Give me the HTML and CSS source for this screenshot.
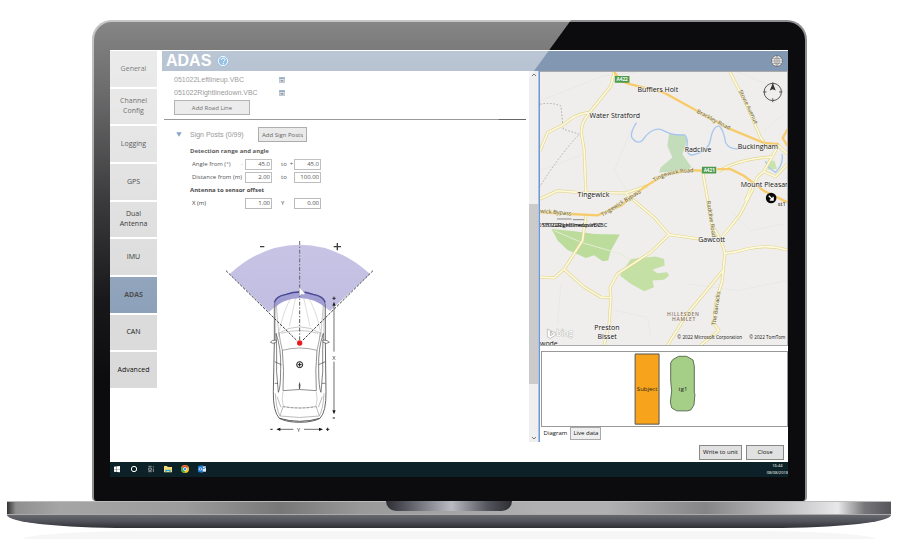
FILE: index.html
```html
<!DOCTYPE html>
<html lang="en">
<head>
<meta charset="utf-8">
<title>ADAS setup</title>
<link rel="stylesheet" href="styles.css">
</head>
<body>
<div class="laptop">
  <div class="lid">
    <div class="screen">
      <div class="app">
        <nav class="sidebar">
          <button class="tile">General</button>
          <button class="tile">Channel<br>Config</button>
          <button class="tile">Logging</button>
          <button class="tile">GPS</button>
          <button class="tile">Dual<br>Antenna</button>
          <button class="tile">IMU</button>
          <button class="tile tile-active">ADAS</button>
          <button class="tile">CAN</button>
          <button class="tile">Advanced</button>
        </nav>
        <main class="main">
          <header class="titlebar">
            <h1 class="title">ADAS</h1>
            <button class="icon-button" aria-label="Help">
              <svg width="12" height="12" viewBox="0 0 36 36"><circle cx="18" cy="18" r="17" fill="#3f8fce"/><circle cx="18" cy="18" r="14" fill="#3f8fce" stroke="#fff" stroke-width="3"/><path d="M13 15c0-7 11-7 11-1 0 4-5 4-5 8M19 24v4" fill="none" stroke="#fff" stroke-width="3"/></svg>
            </button>
            <button class="icon-button icon-globe" aria-label="Language">
              <svg width="12" height="12" viewBox="0 0 36 36"><circle cx="18" cy="18" r="17" fill="#6a6c6e"/><circle cx="18" cy="18" r="15" fill="#fbf9f5"/><path d="M3 18h30M6 11h24M6 25h24M18 3v30M18 4c-9 8-9 20 0 28M18 4c9 8 9 20 0 28" fill="none" stroke="#77797b" stroke-width="2"/></svg>
            </button>
          </header>
          <div class="panes">
            <section class="settings">
              <div class="settings-body">
                <ul class="files">
                  <li><span class="file-name">051022Leftlineup.VBC</span><svg width="6" height="6" viewBox="0 0 18 18"><path d="M1 1h16v16H1z" fill="#c2cad4" stroke="#66788e" stroke-width="2"/><path d="M1 1h16v5H1z" fill="#4a74a6"/><path d="M5 9h8v5H5z" fill="#505b68"/></svg></li>
                  <li><span class="file-name">051022Rightlinedown.VBC</span><svg width="6" height="6" viewBox="0 0 18 18"><path d="M1 1h16v16H1z" fill="#c2cad4" stroke="#66788e" stroke-width="2"/><path d="M1 1h16v5H1z" fill="#4a74a6"/><path d="M5 9h8v5H5z" fill="#505b68"/></svg></li>
                </ul>
                <button class="button button-wide">Add Road Line</button>
                <hr class="rule">
                <div class="section-head">
                  <svg width="6" height="5" viewBox="0 0 18 15"><path d="M1 1h16L9 14z" fill="#4b79ac"/></svg>
                  <span class="section-title">Sign Posts (0/99)</span>
                  <button class="button">Add Sign Posts</button>
                </div>
                <form class="form">
                  <h2 class="form-title">Detection range and angle</h2>
                  <label class="form-label" for="a1">Angle from (°)</label><span class="sign">-</span><input id="a1" value="45.0"><label class="form-mid" for="a2">to&nbsp; +</label><input id="a2" value="45.0">
                  <label class="form-label" for="d1">Distance from (m)</label><span></span><input id="d1" value="2.00"><label class="form-mid" for="d2">to</label><input id="d2" value="100.00">
                  <h2 class="form-title">Antenna to sensor offset</h2>
                  <label class="form-label" for="x1">X (m)</label><span></span><input id="x1" value="1.00"><label class="form-mid" for="y1">Y</label><input id="y1" value="0.00">
                </form>
                <svg class="car" viewBox="60 30 480 620" role="img" aria-label="Detection area">
                  <path d="M89 147Q185 59 299 59T510 147L390 258Q350 219 299 219T207 261Z" fill="#bfbbe1"/>
                  <g fill="none" stroke="#777" stroke-width="2">
                    <path d="M223 350V240Q225 216 255 210Q299 192 342 210Q373 216 376 240V350L378 500Q379 560 360 580Q338 592 299 592T238 580Q219 560 220 500Z" stroke="#666" stroke-width="3"/>
                    <path d="M227 345V245Q230 226 260 220M372 345V245Q369 226 339 220M229 240l8 95M370 240l-8 95" stroke="#aaa"/>
                    <path d="M276 214Q250 255 238 318M322 214Q349 255 361 318M288 214l-20 90M310 214l20 90" stroke="#c9c9c9"/>
                    <path d="M235 325Q299 286 363 325M244 325Q299 308 354 325" stroke="#aaa"/>
                    <path d="M237 322Q240 350 247 376Q299 362 351 376Q358 350 361 322"/>
                    <path d="M247 376Q253 435 249 497Q299 490 349 497Q345 435 351 376" stroke="#555"/>
                    <path d="M228 325Q244 370 242 430Q242 490 235 502Q227 440 230 375ZM370 325Q354 370 356 430Q356 490 363 502Q371 440 368 375Z" stroke="#444"/>
                    <path d="M224 410l20 9M376 410l-20 9M224 475h10M376 475h-10" stroke="#444"/>
                    <path d="M229 345Q214 345 211 352Q218 358 229 352ZM369 345Q384 345 388 352Q380 358 369 352Z" fill="#fff" stroke="#444"/>
                    <path d="M249 500Q244 520 250 544Q299 554 348 544Q354 520 349 500" stroke="#bbb"/>
                    <path d="M248 545Q299 553 350 545" stroke="#777" stroke-dasharray="8 4"/>
                    <path d="M226 505Q228 550 240 573Q299 582 358 573Q370 550 372 505M231 515l12 32M367 515l-12 32M240 573l9-27M358 573l-9-27" stroke="#999"/>
                    <path d="M238 580Q299 598 360 580" stroke="#555" stroke-width="3"/>
                  </g>
                  <path d="M223 250V237Q226 215 256 209Q299 194 342 209Q374 216 376 237V249Q345 219 299 219T223 250Z" fill="#827fca" fill-opacity=".55"/>
                  <path d="M223 232Q228 213 258 208Q299 194 340 208Q370 213 376 232" fill="none" stroke="#3d3d90" stroke-width="4"/>
                  <path d="M299 48V345" fill="none" stroke="#555" stroke-width="3" stroke-dasharray="12 5 4 5"/>
                  <path d="M78 137L292 348M519 137L306 348" fill="none" stroke="#333" stroke-width="3" stroke-dasharray="8 4"/>
                  <path d="M298 187v27l6-6 8 1 3-4z" fill="#fff" stroke="#888"/>
                  <circle cx="299" cy="354" r="8" fill="#e8141c"/>
                  <circle cx="299" cy="419" r="9" fill="#fff" stroke="#111" stroke-width="3"/><path d="M299 413v12M293 419h12" stroke="#111" stroke-width="3"/>
                  <path d="M299 470q5 10 1 22h-3q-3-12 2-22z" fill="#555"/>
                  <path d="M402 244v136M402 410v146M238 613h42M312 613h48" stroke="#222" stroke-width="2"/>
                  <path d="M402 230l5 12h-10zM402 568l5-12h-10zM229 613l12-5v10zM369 613l-12-5v10z" fill="#111"/>
                  <path d="M180 65h13M401 65h22M412 54v22" stroke="#222" stroke-width="4"/>
                  <path d="M397 220h10M402 215v10M398 579h7M211 613h7M378 613h10M383 608v10" stroke="#222" stroke-width="3"/>
                  <text class="axis" x="402" y="404">X</text><text class="axis" x="296" y="620">Y</text>
                </svg>
              </div>
              <div class="scrollbar">
                <svg width="9" height="8" viewBox="0 0 9 8"><path d="M3 5l2-2 2 2" fill="none" stroke="#777"/></svg>
                <div class="scroll-thumb"></div>
                <svg width="9" height="8" viewBox="0 0 9 8"><path d="M3 3l2 2 2-2" fill="none" stroke="#777"/></svg>
              </div>
            </section>
            <div class="splitter"></div>
            <section class="views">
              <svg class="map" viewBox="27 63 744 822" role="img" aria-label="Map of Buckingham area">
                <defs><path id="tingewick-road" d="M372 394Q410 366 490 364"/></defs>
                <path d="M0 0H800V900H0Z" fill="#efeeec"/>
                <g fill="none" stroke="#e6e5e3" stroke-width="2"><path d="M27 150l190-75 100-12M300 240l-50 120 40 60M27 360l130-50M620 63l150 60M470 700l150 20 150-30M250 780l100 20 10 60M90 700l-10 120M600 480l60 60 100-20M700 240l60-50M640 300l80-20"/></g>
                <path d="M415 250L460 250L470 270L455 310L482 348L470 360L385 365L390 350L425 320L410 285Z" fill="#c3dcba"/>
                <path d="M712 330l20 0 8 25-28 2z" fill="#c9e3b0"/>
                <path d="M62 535L130 542L190 550L267 552L240 600L232 630L215 632L190 614L165 622L110 598L80 570Z" fill="#bcdc9b"/>
                <path d="M267 675L300 625L375 618L400 625L402 645L365 658L380 668L410 665L415 675L400 688L365 690L370 710L340 722L300 700Z" fill="#c4e0a5"/>
                <path d="M70 540L150 575L270 610L300 630" fill="none" stroke="#e3ecd6" stroke-width="3"/>
                <path d="M27 160Q60 153 90 165L97 235L145 250Q80 320 27 408" fill="none" stroke="#b0b0b0" stroke-width="3" stroke-dasharray="5 5"/>
                <path d="M317 215Q298 245 303 260Q325 290 345 255Q375 225 400 240Q425 255 462 252Q474 265 468 290Q470 320 495 310Q535 300 540 265Q548 222 567 226Q580 240 585 275Q600 305 650 288M755 310Q760 340 735 365Q710 350 705 330" fill="none" stroke="#a9c7ee" stroke-width="4"/>
                <g fill="none" stroke-linejoin="round">
                  <path d="M250 63L240 105L172 190Q148 220 152 250L160 300L165 430M172 185Q130 190 100 220L50 245L27 300M27 445L80 420L140 425L285 427L350 405M598 63L650 165L690 260L715 295M516 362L528 430L545 525Q575 570 583 608L575 690L555 760L550 820L565 840L510 885M575 662L520 730L470 790L410 885M565 362Q620 325 725 318L700 362L680 380L665 420L630 490L590 540L565 570M285 427L310 450L370 500L415 552L505 565M415 552L360 605L260 670L238 710L240 745L235 820L220 885M27 680L70 682L100 655L155 570L165 495M100 657L160 710L210 740L242 742M585 608Q620 605 650 595Q710 580 771 598M715 290L740 280L771 310M725 318L740 290M700 362L735 378L771 340M645 450L665 400" stroke="#e2d68e" stroke-width="9"/>
                  <path d="M250 63L240 105L172 190Q148 220 152 250L160 300L165 430M172 185Q130 190 100 220L50 245L27 300M27 445L80 420L140 425L285 427L350 405M598 63L650 165L690 260L715 295M516 362L528 430L545 525Q575 570 583 608L575 690L555 760L550 820L565 840L510 885M575 662L520 730L470 790L410 885M565 362Q620 325 725 318L700 362L680 380L665 420L630 490L590 540L565 570M285 427L310 450L370 500L415 552L505 565M415 552L360 605L260 670L238 710L240 745L235 820L220 885M27 680L70 682L100 655L155 570L165 495M100 657L160 710L210 740L242 742M585 608Q620 605 650 595Q710 580 771 598M715 290L740 280L771 310M725 318L740 290M700 362L735 378L771 340M645 450L665 400" stroke="#fdf9df" stroke-width="5"/>
                </g>
                <path d="M250 63L270 90L300 100L400 125L500 180L600 235L700 276L745 280M771 235L757 262L771 285M27 485L120 490L200 494L270 465L340 410L400 372L480 358L515 360M560 355H600L640 375L700 420L771 455" fill="none" stroke="#f7cb69" stroke-width="7"/>
                <g class="road-label">
                  <text transform="translate(497 185) rotate(28)">Brackley Road</text>
                  <text transform="translate(624 120) rotate(64)">Stowe Avenue</text>
                  <text><textPath href="#tingewick-road">Tingewick Road</textPath></text>
                  <text transform="translate(215 498) rotate(-32)">Tingewick Bypass</text>
                  <text transform="translate(27 486) rotate(5)">wick Bypass</text>
                  <text transform="translate(528 452) rotate(81)">Radclive Road</text>
                  <text transform="translate(555 825) rotate(-82)">The Barracks</text>
                </g>
                <path d="M252 75h44v20h-44zM514 348h43v20h-43z" fill="#4c9a4b"/>
                <text class="shield" x="274" y="91">A422</text><text class="shield" x="536" y="364">A421</text>
                <g class="place">
                  <text x="320" y="122">Bufflers Holt</text>
                  <text x="176" y="201">Water Stratford</text>
                  <text x="462" y="303">Radclive</text>
                  <text x="622" y="296">Buckingham</text>
                  <text x="631" y="409">Mount Pleasant</text>
                  <text x="140" y="438">Tingewick</text>
                  <text x="503" y="573">Gawcott</text>
                  <text x="190" y="840">Preston</text>
                  <text x="200" y="867">Bisset</text>
                  <text x="27" y="887">wode</text>
                </g>
                <text class="hamlet" x="458" y="796">HILLESDEN</text><text class="hamlet" x="460" y="813">HAMLET</text>
                <path d="M78 505h44M126 507h34" stroke="#555" stroke-width="2"/>
                <text class="track" x="22" y="528">051022Rightlinedown.VBC</text>
                <text class="track" x="36" y="528">051022Leftlineup.VBC</text>
                <circle cx="722" cy="442" r="16" fill="#050505"/><path d="M715 435l12 12M728 438v10h-10" fill="none" stroke="#fff" stroke-width="4"/>
                <text class="track" x="742" y="465">st1</text>
                <g fill="none" stroke="#555" stroke-width="3"><circle cx="727" cy="123" r="26"/><path d="M727 94v10M727 142v12M698 123h10M746 123h10"/></g><path d="M727 97l9 22-9-4-9 4z" fill="#333"/>
                <path d="M49 836l9 4v16l9-5-5-3-2-6 13 5v8l-15 9-9-5z" fill="#fff" stroke="#aaa" stroke-width="2"/>
                <text class="bing" x="76" y="858">bing</text>
                <text class="credit" x="440" y="867">© 2022 Microsoft Corporation</text><text class="credit" x="656" y="867">© 2022 TomTom</text>
              </svg>
              <div class="diagram">
                <svg class="targets" viewBox="0 0 738 222" role="img" aria-label="Subject and target">
                  <path d="M280 6h72v211h-72z" fill="#f7a41c" stroke="#555" stroke-width="3"/>
                  <path d="M411 13h24l19 11 4 18v82l2 2-3 33-9 15-10 3h-33l-15-9-4-18 4-33-3-30V33l6-10z" fill="#a5ce87" stroke="#5e7056" stroke-width="3"/>
                  <text class="target-label" x="316" y="118">Subject</text><text class="target-label" x="424" y="118">tg1</text>
                </svg>
              </div>
              <div class="tabs" role="tablist">
                <button class="tab tab-active" role="tab">Diagram</button><button class="tab" role="tab">Live data</button>
              </div>
            </section>
          </div>
          <footer class="actions"><button class="button">Write to unit</button><button class="button button-close">Close</button></footer>
        </main>
      </div>
      <div class="taskbar">
        <svg width="8" height="8" viewBox="0 0 24 24"><path d="M3 5l8-1v8H3zM12 4l9-1v9h-9zM3 13h8v8l-8-1zM12 13h9v9l-9-1z" fill="#fff"/></svg>
        <svg width="8" height="8" viewBox="0 0 24 24"><circle cx="12" cy="12" r="8" fill="none" stroke="#fff" stroke-width="3"/></svg>
        <svg width="8" height="8" viewBox="0 0 24 24"><path d="M4 4h10M4 20h10M5 9h8v7H5zM19 4v4M19 11v10" fill="none" stroke="#ccc" stroke-width="2"/></svg>
        <svg width="8" height="8" viewBox="0 0 24 24"><path d="M0 3h9l2 3h13v16H0z" fill="#f8dc76"/><path d="M4 22v-8h16v8h-4v-4H8v4z" fill="#33a4dc"/></svg>
        <svg width="8" height="8" viewBox="0 0 24 24"><circle cx="12" cy="12" r="12" fill="#f4c51f"/><path d="M12 12L2 6a12 12 0 0 1 20 0z" fill="#e64435"/><path d="M12 12L2 6a12 12 0 0 0 9 18z" fill="#37a551"/><circle cx="12" cy="12" r="5" fill="#4688ed" stroke="#fff" stroke-width="2"/></svg>
        <svg width="8" height="8" viewBox="0 0 24 24"><path d="M9 4h15v16H9z" fill="#e8f2fc"/><path d="M10 5l7 7 7-7" fill="none" stroke="#2276ca" stroke-width="3"/><path d="M0 3l14-3v24L0 21z" fill="#1677cf"/><circle cx="7" cy="12" r="4" fill="none" stroke="#fff" stroke-width="2"/></svg>
        <div class="clock"><span>16:44</span><span>08/08/2018</span></div>
      </div>
    </div>
  </div>
  <div class="deck"><div class="notch"></div></div>
  <div class="underside"></div>
  <div class="shadow"></div>
</div>
</body>
</html>
```

FILE: styles.css
```css
* { box-sizing: border-box; }
body { margin: 0; background: #fff; font-family: "Open Sans", "Noto Sans", sans-serif; font-size: 6px; color: #111; overflow: hidden; }
button, input { font: inherit; color: inherit; margin: 0; padding: 0; }
h1, h2, ul { margin: 0; padding: 0; }
svg { display: block; }

.laptop { padding: 20px 9px 0 7px; }
.lid { position: relative; margin: 0 84px 0 85px; padding: 28px 17px 24px 16px; border: 2px solid #8d8e90; border-bottom: 0; border-radius: 20px 20px 4px 4px; background: #0c0c0e; }
.lid::after { content: ""; position: absolute; inset: -2px; border-radius: 20px 0 0 0; background: linear-gradient(rgba(255,255,255,.5), rgba(255,255,255,.4) 14%, rgba(255,255,255,.19) 38%, rgba(255,255,255,.05) 58%, rgba(255,255,255,0) 75%); clip-path: polygon(0 0, 67% 0, 18% 100%, 0 100%); pointer-events: none; }
.screen { background: #fff; }

.app { display: grid; grid-template-columns: 47px 1fr; gap: 5px; padding-top: 1px; }
.sidebar { display: grid; grid-auto-rows: 1fr; gap: 2px; height: 337px; }
.tile { border: 0; background: #dadada; font-size: 7px; line-height: 10px; }
.tile-active { background: #889db7; color: #444; font-weight: 700; }

.titlebar { display: flex; align-items: center; gap: 6px; height: 20px; padding: 0 5px 0 4px; background: #8297b1; }
.title { font: 700 16px/20px "Liberation Sans", sans-serif; color: #fff; }
.icon-button { border: 0; background: none; }
.icon-globe { margin-left: auto; }

.panes { display: grid; grid-template-columns: 375fr 2px 248fr; }
.settings { display: flex; }
.settings-body { flex: 1; padding: 2px 3px 0 2px; }
.files { list-style: none; font: 7px/13px "Liberation Sans", sans-serif; color: #555; }
.files li { display: flex; align-items: center; padding-left: 10px; }
.file-name { width: 105px; }
.button { height: 15px; padding: 0 3px; border: 1px solid #888; background: #e1e1e1; line-height: 12px; white-space: nowrap; }
.button-wide { width: 76px; margin: 1px 0 0 10px; display: block; }
.rule { height: 1px; margin: 4px 0 7px; border: 0; background: #666; }
.section-head { display: flex; align-items: center; padding-left: 12px; }
.section-title { width: 68px; margin-left: 8px; font: 7px/14px "Liberation Sans", sans-serif; color: #666; }
.form { display: grid; grid-template-columns: 51px 4px 27px 22px 27px; grid-auto-rows: 11px; row-gap: 2px; align-items: center; padding: 4px 0 0 26px; line-height: 11px; }
.form-title { grid-column: 1 / -1; font-size: 6px; font-weight: 700; }
.form-label { padding-left: 2px; white-space: nowrap; }
.form-mid { padding-left: 9px; white-space: nowrap; }
.sign { color: #999; }
.form input { width: 27px; height: 11px; border: 1px solid #aaa; padding-right: 1px; text-align: right; background: #fff; }
.car { width: 160px; margin: 26px 0 0 56px; }
.axis { font-size: 17px; text-anchor: middle; fill: #333; }
.scrollbar { display: flex; flex-direction: column; justify-content: space-between; width: 9px; background: #efefef; }
.scroll-thumb { height: 180px; margin-top: 76px; background: #cbcbcb; }
.splitter { border-left: 1px solid #a9c2e6; border-right: 1px solid #7297d0; background: #7297d0; }

.map { width: 100%; border: 1px solid #aaa; border-left: 0; }
.place { font-size: 21px; fill: #111; stroke: #f6f5f3; stroke-width: 3px; paint-order: stroke; }
.road-label { font-size: 17px; fill: #5d5330; stroke: #f5eed0; stroke-width: 2px; paint-order: stroke; }
.shield { font-size: 14px; font-weight: 700; text-anchor: middle; fill: #fff; }
.hamlet { font-size: 15px; font-weight: 600; letter-spacing: 2px; text-anchor: middle; fill: #8d7566; }
.track { font-size: 17px; fill: #111; }
.bing { font-size: 24px; font-weight: 600; fill: #fff; stroke: #aaa; stroke-width: 2px; paint-order: stroke; }
.credit { font-size: 14px; fill: #111; }

.diagram { margin: 5px 0 0 1px; border: 1px solid #999; background: #fff; }
.targets { width: 100%; }
.target-label { font-size: 18px; text-anchor: middle; fill: #222; }
.tabs { display: flex; align-items: flex-start; height: 13px; padding-left: 1px; }
.tab { height: 13px; padding: 0 2px; border: 1px solid #aaa; background: #eee; line-height: 11px; }
.tab-active { border-color: transparent; background: #fff; }
.actions { display: flex; justify-content: flex-end; gap: 4px; padding: 3px 4px 2px 0; }
.button-close { width: 38px; }

.taskbar { display: flex; align-items: center; gap: 9px; height: 15px; padding-left: 3px; background: #0d2128; overflow: hidden; }
.clock { display: flex; flex-direction: column; align-items: center; margin-left: auto; color: #fff; font-size: 4px; line-height: 7px; }

.deck { height: 14px; border-top: 1px solid #bbb; border-bottom: 1px solid #aaa; background: linear-gradient(90deg, #333, #8f8f8f 1%, #a5a5a5 6%, #9c9c9c 20%, #777 31%, #999 40%, #b0b0b3 60%, #b0b0b3 68%, #858588 79%, #b9b9bc 87%, #e8e8ea 94%, #77777a 97%, #55555a); }
.notch { width: 126px; height: 10px; margin: -1px auto 0; border-radius: 0 0 10px 10px; background: linear-gradient(90deg, #2d2d33, #60616a 20%, #b9bac2 52%, #55565e 80%, #2d2d33); }
.underside { height: 13px; border-radius: 0 0 120px 120px / 0 0 13px 13px; background: linear-gradient(#68696f, #505159 50%, #303036); }
.shadow { height: 9px; margin: 3px 14px 0; border-radius: 120px 120px 0 0 / 9px 9px 0 0; background: #f6f6f6; }
```
